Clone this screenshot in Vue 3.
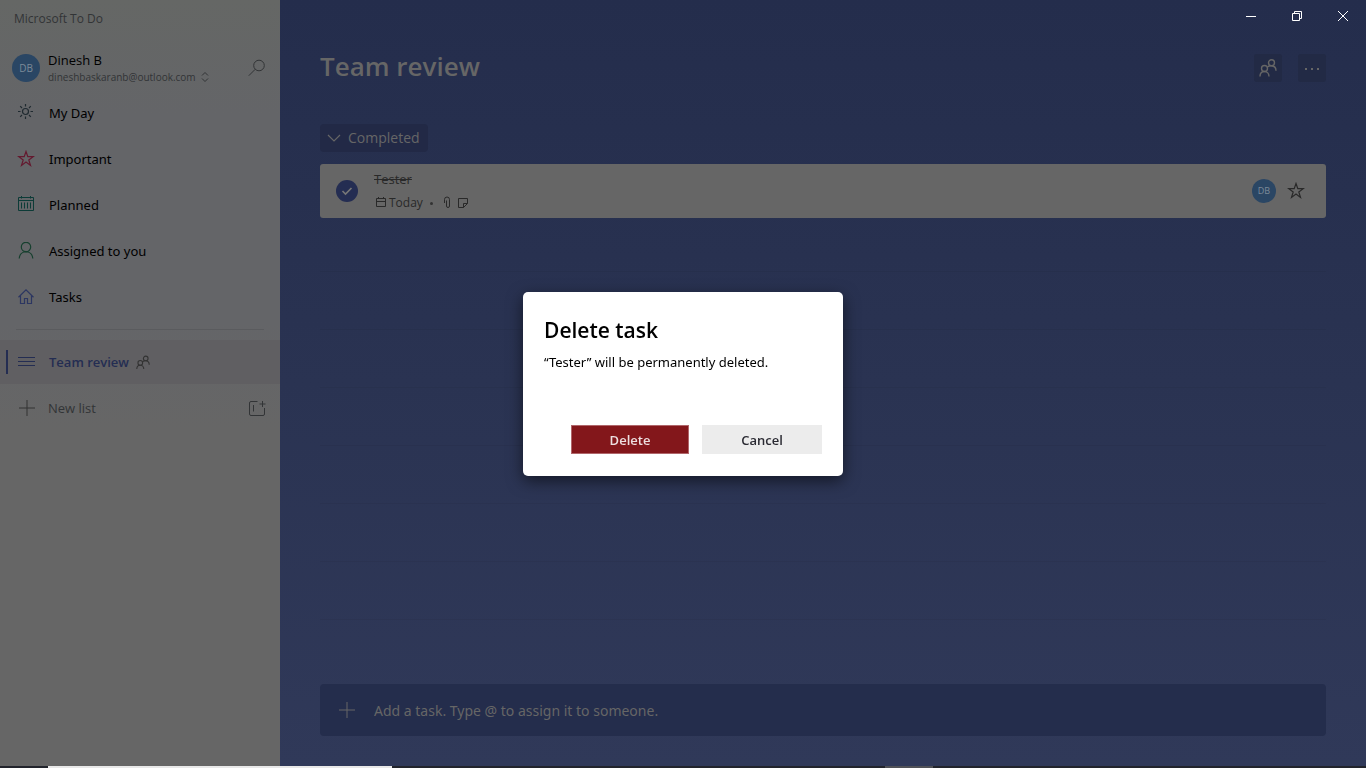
<script setup>
import { ref } from 'vue'

const navItems = [
  { id: 'day', label: 'My Day' },
  { id: 'important', label: 'Important' },
  { id: 'planned', label: 'Planned' },
  { id: 'assigned', label: 'Assigned to you' },
  { id: 'tasks', label: 'Tasks' }
]
const draft = ref('')
const done = ref(true)
const emptyRows = 7
</script>

<template>
  <div class="screen">
    <div class="window">
      <aside class="sidebar">
        <div class="app-name">Microsoft To Do</div>
        <div class="account">
          <span class="avatar avatar-lg">DB</span>
          <button class="who" type="button">
            <span class="name">Dinesh B</span>
            <span class="mail">dineshbaskaranb@outlook.com
              <svg width="8" height="12" viewBox="0 0 8 12"><path d="M1 4.5 4 1.5l3 3M1 7.5l3 3 3-3" /></svg>
            </span>
          </button>
          <button class="search" type="button" aria-label="Search">
            <svg width="18" height="18" viewBox="0 0 18 18"><circle cx="11" cy="6.5" r="5.3" /><path d="M7.2 10.3.8 16.7" /></svg>
          </button>
        </div>

        <nav>
          <a v-for="item in navItems" :key="item.id" href="#" class="item">
            <svg v-if="item.id === 'day'" class="ic day" viewBox="0 0 18 18"><circle cx="8.5" cy="7.5" r="3" /><path d="M8.5 0v2.500M8.5 12.500V15M1 7.500h2.500M13.500 7.500H16M3.200 2.200 5 4M12 11l1.800 1.800M3.200 12.800 5 11M12 4l1.800-1.800" /></svg>
            <svg v-else-if="item.id === 'important'" class="ic important" viewBox="0 0 18 18"><path d="m9 1.500 1.800 5.200h5.400l-4.400 3.300 1.700 5.400L9 12.100l-4.500 3.300L6.200 10 1.800 6.700h5.400z" /></svg>
            <svg v-else-if="item.id === 'planned'" class="ic planned" viewBox="0 0 18 18"><path d="M1.500 1.500h15v13h-15zM1.500 4.500h15M4.500 0v2.500M13.500 0v2.500M4.500 6.500v6M7.500 6.500v6M10.500 6.500v6M13.500 6.500v6" /></svg>
            <svg v-else-if="item.id === 'assigned'" class="ic assigned" viewBox="0 0 18 18"><circle cx="9" cy="5" r="4.700" /><path d="M2.200 16.500c.2-3.800 2.900-6.600 6.800-6.800 3.900.2 6.600 3 6.800 6.800" /></svg>
            <svg v-else class="ic tasks" viewBox="0 0 18 18"><path d="m1.500 9.200 7.500-7.400 7.500 7.400M3.500 7.500v8h4v-5h3v5h4v-8" /></svg>
            <span>{{ item.label }}</span>
          </a>
          <hr class="divider">
          <a href="#" class="item selected">
            <svg class="ic lines" viewBox="0 0 18 18"><path d="M1 4.500h17M1 8.500h17M1 12.500h17" /></svg>
            <span>Team review</span>
            <svg class="people people-sm" width="14" height="15" viewBox="0 0 18 18"><circle cx="12.500" cy="3.800" r="3" /><circle cx="5.500" cy="9.500" r="3" /><path d="M1 17.500c0-3 1.800-5 4.500-5s4.500 2 4.500 5M8.500 8c1.200-1 2.600-1.400 4-1.200 2.700.2 4.500 2 4.500 5" /></svg>
          </a>
          <div class="new-list">
            <button class="new" type="button">
              <svg width="18" height="18" viewBox="0 0 18 18"><path d="M9 1v16M1 9h16" /></svg>
              <span>New list</span>
            </button>
            <button class="new-group" type="button" aria-label="New group">
              <svg width="18" height="18" viewBox="0 0 18 18"><path d="M9.500 2.500H3A1.500 1.500 0 0 0 1.500 4v11A1.500 1.500 0 0 0 3 16.500h12a1.500 1.500 0 0 0 1.500-1.500V9M5.500 6v6.500M14.500 2v6M11.500 5h6" /></svg>
            </button>
          </div>
        </nav>
      </aside>

      <main class="main">
        <div class="controls">
          <button type="button" aria-label="Minimize"><svg width="12" height="12" viewBox="0 0 12 12"><path d="M1 6.500h10" /></svg></button>
          <button type="button" aria-label="Restore"><svg width="12" height="12" viewBox="0 0 12 12"><path d="M1.500 3.500h7v7h-7zM3.500 3.500v-2h7v7h-2" /></svg></button>
          <button type="button" aria-label="Close"><svg width="12" height="12" viewBox="0 0 12 12"><path d="m1 1 10 10M11 1 1 11" /></svg></button>
        </div>

        <div class="content">
          <header class="head">
            <h1>Team review</h1>
            <button class="tool" type="button" aria-label="Share list">
              <svg class="people" width="18" height="18" viewBox="0 0 18 18"><circle cx="12.500" cy="3.800" r="3" /><circle cx="5.500" cy="9.500" r="3" /><path d="M1 17.500c0-3 1.800-5 4.500-5s4.500 2 4.500 5M8.500 8c1.200-1 2.600-1.400 4-1.200 2.700.2 4.500 2 4.500 5" /></svg>
            </button>
            <button class="tool" type="button" aria-label="More options">
              <svg class="dots" width="18" height="18" viewBox="0 0 18 18"><path d="M2 9h2v2H2zM8 9h2v2H8zM14 9h2v2h-2z" /></svg>
            </button>
          </header>

          <button class="completed" type="button">
            <svg width="14" height="14" viewBox="0 0 14 14"><path d="m1 4 6 6 6-6" /></svg>
            <span>Completed</span>
          </button>

          <article class="task">
            <label class="check">
              <input v-model="done" type="checkbox" aria-label="Tester completed">
              <svg width="12" height="10" viewBox="0 0 12 10"><path d="m1.500 5 3 3L10.500 2" /></svg>
            </label>
            <div class="detail">
              <div class="task-name">Tester</div>
              <div class="meta">
                <svg width="12" height="14" viewBox="0 0 12 14"><path d="M1.500 2.500h9v8h-9zM1.500 5.500h9M3.500 1v1.500M8.500 1v1.500" /></svg>
                <span class="due">Today</span>
                <span class="dot"></span>
                <svg class="clip" width="8" height="14" viewBox="0 0 8 14"><path d="M1.500 7V3.500a2.500 2.500 0 0 1 5 0V10a1.500 1.500 0 0 1-3 0V4.500" /></svg>
                <svg width="12" height="14" viewBox="0 0 12 14"><path d="M1.500 2.500h9v5l-4 4h-5zM6.500 11.500v-4h4" /></svg>
              </div>
            </div>
            <span class="avatar avatar-sm">DB</span>
            <button class="star" type="button" aria-label="Mark as important">
              <svg width="18" height="18" viewBox="0 0 18 18"><path d="m9 1.500 1.800 5.200h5.400l-4.400 3.300 1.700 5.400L9 12.100l-4.500 3.300L6.200 10 1.800 6.700h5.400z" /></svg>
            </button>
          </article>

          <div class="rows" aria-hidden="true">
            <div v-for="n in emptyRows" :key="n" class="row"></div>
          </div>

          <label class="add">
            <svg width="18" height="18" viewBox="0 0 18 18"><path d="M9 1v16M1 9h16" /></svg>
            <input v-model="draft" type="text" aria-label="Add a task" placeholder="Add a task. Type @ to assign it to someone.">
          </label>
        </div>
      </main>
    </div>

    <div class="taskbar"><span class="tb-start"></span><span class="tb-search"></span><span class="tb-gap"></span><span class="tb-active"></span><span class="tb-rest"></span></div>

    <div class="overlay">
      <section class="dialog" role="dialog" aria-labelledby="dialog-title">
        <h2 id="dialog-title">Delete task</h2>
        <p>“Tester” will be permanently deleted.</p>
        <div class="actions">
          <button class="delete" type="button">Delete</button>
          <button class="cancel" type="button">Cancel</button>
        </div>
      </section>
    </div>
  </div>
</template>

<style>
body {
  margin: 0;
}
</style>

<style scoped>
* {
  box-sizing: border-box;
}
.screen {
  display: flex;
  flex-direction: column;
  min-height: 100vh;
  font-family: "Segoe UI", "Open Sans", "Noto Sans", sans-serif;
  font-size: 13px;
  line-height: 18px;
}
button {
  padding: 0;
  border: 0;
  background: none;
  color: inherit;
  font: inherit;
  text-align: left;
}
svg {
  display: block;
  flex: none;
  fill: none;
  stroke: currentColor;
  stroke-width: 1;
}
.window {
  flex: 1;
  display: grid;
  grid-template-columns: 280px 1fr;
}
.sidebar {
  background: linear-gradient(#656765, #646568 15%, #646568 42%, #666666 56%, #666666);
  color: #323436;
}
.app-name {
  padding: 10px 14px 0;
  height: 46px;
  font-size: 12px;
}
.account {
  display: flex;
  align-items: center;
  height: 44px;
  padding: 0 14px 0 12px;
}
.avatar {
  display: grid;
  place-items: center;
  flex: none;
  border-radius: 50%;
  background: #2a4664;
  color: #7c8a98;
}
.avatar-lg {
  width: 28px;
  height: 28px;
  font-size: 10px;
}
.avatar-sm {
  width: 24px;
  height: 24px;
  font-size: 9px;
}
.who {
  flex: 1;
  margin-left: 8px;
}
.name {
  display: block;
  color: #000;
  line-height: 17px;
}
.mail {
  display: flex;
  align-items: center;
  gap: 5px;
  font-size: 10px;
  line-height: 16px;
  white-space: nowrap;
}
.item {
  display: flex;
  align-items: center;
  height: 46px;
  padding-left: 17px;
  color: #000;
  text-decoration: none;
}
.ic {
  width: 18px;
  height: 18px;
  margin-right: 14px;
}
.day,
.important,
.tasks {
  stroke-width: 1.2;
}
.day { color: #1f2a30; }
.important { color: #64192f; }
.planned { color: #0c3b37; }
.assigned { color: #17402f; stroke-width: 1.2; }
.tasks { color: #2c3661; }
.divider {
  height: 1px;
  margin: 9px 16px 10px;
  border: 0;
  background: #5a5b5e;
}
.selected {
  position: relative;
  height: 44px;
  background: #605f62;
  color: #242d52;
  font-weight: 600;
}
.selected::before {
  content: "";
  position: absolute;
  left: 6px;
  top: 10px;
  width: 2px;
  height: 24px;
  background: #242d52;
}
.people {
  stroke-width: 1.4;
}
.people-sm {
  margin-left: 7px;
  color: #333;
}
.new-list {
  display: flex;
  align-items: center;
  justify-content: space-between;
  height: 48px;
  padding: 0 14px 0 18px;
}
.new {
  display: flex;
  align-items: center;
  gap: 12px;
}
.new svg {
  color: #333;
}

.main {
  display: flex;
  flex-direction: column;
  background: linear-gradient(#242d4c, #2a3352 50%, #303959);
  color: #666;
}
.controls {
  display: flex;
  justify-content: flex-end;
  color: #fff;
}
.controls button {
  display: grid;
  place-items: center;
  width: 46px;
  height: 32px;
}
.content {
  flex: 1;
  display: flex;
  flex-direction: column;
  padding: 14px 40px 30px;
}
.head {
  display: flex;
  align-items: center;
  gap: 16px;
  height: 44px;
}
h1 {
  flex: 1;
  margin: 0;
  padding-bottom: 4px;
  font-size: 26px;
  line-height: 32px;
  font-weight: 600;
}
.tool {
  display: grid;
  place-items: center;
  width: 28px;
  height: 28px;
  border-radius: 3px;
  background: #222a45;
}
.dots {
  fill: currentColor;
  stroke: none;
}
.completed {
  display: flex;
  align-items: center;
  align-self: flex-start;
  gap: 7px;
  height: 28px;
  margin: 34px 0 12px;
  padding: 0 8px 0 7px;
  border-radius: 4px;
  background: #222946;
  font-size: 14px;
}
.completed svg {
  stroke-width: 1.2;
}
.task {
  display: flex;
  align-items: center;
  height: 54px;
  padding: 0 21px 0 16px;
  border-radius: 3px;
  background: #666;
  color: #292929;
}
.check {
  display: grid;
  place-items: center;
}
.check input {
  grid-area: 1 / 1;
  width: 22px;
  height: 22px;
  margin: 0;
  border-radius: 50%;
  background: #242d52;
  appearance: none;
}
.check svg {
  grid-area: 1 / 1;
  color: #777;
  stroke-width: 1.6;
  pointer-events: none;
}
.detail {
  flex: 1;
  margin-left: 16px;
}
.task-name {
  margin-bottom: 6px;
  text-decoration: line-through;
}
.meta {
  display: flex;
  align-items: center;
  margin-left: 1px;
  font-size: 12px;
}
.due {
  margin-left: 2px;
}
.dot {
  width: 3px;
  height: 3px;
  margin: 0 10px 0 7px;
  border-radius: 50%;
  background: #333;
}
.clip {
  margin-right: 6px;
}
.star {
  margin-left: 11px;
}
.star svg {
  stroke-width: 1.2;
}
.rows {
  flex: 1;
  padding-bottom: 64px;
}
.row {
  height: 58px;
  border-bottom: 1px solid rgb(0 0 0 / 4%);
}
.row:first-child {
  height: 54px;
}
.add {
  display: flex;
  align-items: center;
  gap: 18px;
  height: 52px;
  padding: 0 18px;
  border-radius: 4px;
  background: #242d4c;
}
.add input {
  flex: 1;
  min-width: 0;
  padding: 2px 0 0;
  border: 0;
  outline: 0;
  background: none;
  color: inherit;
  font: inherit;
  font-size: 14px;
}
.add input::placeholder {
  color: #666;
  opacity: 1;
}
.item:not(.selected),
.add input,
p {
  font-family: "Segoe UI", "Noto Sans", sans-serif;
}

.taskbar {
  display: flex;
  height: 2px;
  background: #22242c;
}
.tb-start { width: 48px; }
.tb-search { width: 344px; background: #e8e8e8; }
.tb-gap { flex: 493; }
.tb-active { width: 48px; background: #505157; }
.tb-rest { flex: 433; }

.overlay {
  position: fixed;
  inset: 0;
  display: grid;
  place-items: center;
}
.dialog {
  width: 320px;
  padding: 24px 21px 22px;
  border-radius: 5px;
  background: #fff;
  box-shadow: 0 5px 16px rgb(0 0 0 / 55%);
  color: #000;
}
h2 {
  margin: 0;
  font-size: 21px;
  line-height: 28px;
  font-weight: 600;
}
p {
  margin: 9px 0 54px;
}
.actions {
  display: flex;
  justify-content: flex-end;
  gap: 13px;
}
.actions button {
  height: 29px;
  font-weight: 600;
  text-align: center;
}
.actions .delete {
  width: 118px;
  border: 1px solid #b0666a;
  background: #83171b;
  color: #eddfe0;
}
.actions .cancel {
  width: 120px;
  background: #ececec;
  color: #2b2b33;
}
</style>
